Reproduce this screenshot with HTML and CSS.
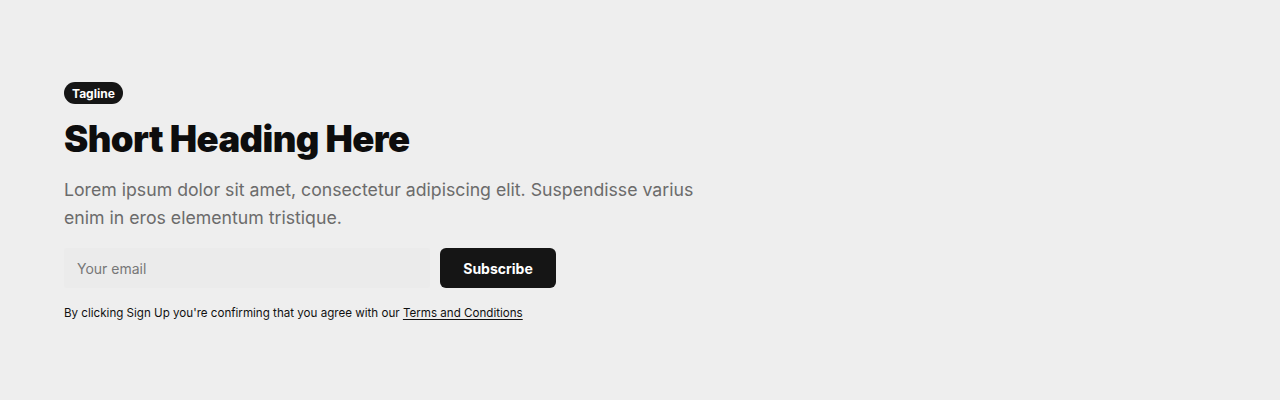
FILE: index.html
```html
<!DOCTYPE html>
<html lang="en">
<head>
<meta charset="utf-8">
<link rel="stylesheet" href="styles.css">
</head>
<body>
<section class="cta">
  <div class="content">
    <span class="tag">Tagline</span>
    <h1 class="heading">Short Heading Here</h1>
    <p class="lead">Lorem ipsum dolor sit amet, consectetur adipiscing elit. Suspendisse varius enim in eros elementum tristique.</p>
    <form class="signup">
      <input class="email" type="email" placeholder="Your email">
      <button class="btn" type="button">Subscribe</button>
    </form>
    <p class="fine">By clicking Sign Up you're confirming that you agree with our <a href="#" class="link">Terms and Conditions</a></p>
  </div>
</section>
</body>
</html>
```
FILE: styles.css
```css
* { box-sizing: border-box; }
html, body { margin: 0; padding: 0; }
body {
  background: #eeeeee;
  font-family: "Inter", "Noto Sans", sans-serif;
  color: #111;
  width: 1280px;
  height: 400px;
  overflow: hidden;
}
.cta {
  padding: 82px 64px 0;
}
.content {
  display: flex;
  flex-direction: column;
  align-items: flex-start;
  width: 640px;
}
.tag {
  display: inline-flex;
  align-items: center;
  height: 22px;
  padding: 0 8px;
  border-radius: 11px;
  background: #151515;
  color: #fff;
  font-size: 12px;
  font-weight: 700;
}
.heading {
  margin: 12px 0 0;
  font-size: 36.5px;
  line-height: 46px;
  font-weight: 900;
  letter-spacing: -0.6px;
  color: #0d0d0d;
}
.lead {
  margin: 14px 0 0;
  width: 640px;
  font-size: 17.7px;
  line-height: 28px;
  color: #6b6b6b;
  font-weight: 400;
}
.signup {
  display: flex;
  gap: 10px;
  margin-top: 16px;
}
.email {
  width: 366px;
  height: 40px;
  border: none;
  background: #ebebeb;
  padding: 0 13px;
  font-family: inherit;
  font-size: 14px;
  color: #111;
  border-radius: 2px;
  outline: none;
}
.email::placeholder { color: #777; }
.btn {
  height: 40px;
  width: 116px;
  border: none;
  border-radius: 6px;
  background: #151515;
  color: #fff;
  font-family: inherit;
  font-size: 14px;
  font-weight: 700;
}
.fine {
  margin: 17px 0 0;
  font-size: 11.6px;
  line-height: 16px;
  color: #111;
}
.link {
  color: #111;
  text-decoration: underline;
  text-underline-offset: 2px;
}
```
